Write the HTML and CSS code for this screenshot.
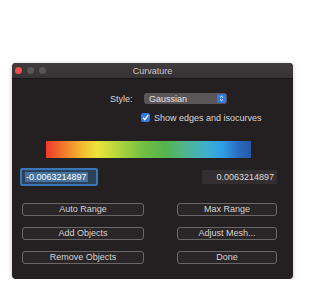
FILE: index.html
```html
<!DOCTYPE html>
<html lang="en">

<head>
    <meta charset="UTF-8">
    <meta name="viewport" content="width=device-width, initial-scale=1.0">
    <title>Curvature</title>
    <link rel="stylesheet" href="styles.css">
</head>

<body>
    <div class="window">
        <div class="titlebar">
            <div class="lights">
                <span class="light red"></span>
                <span class="light"></span>
                <span class="light"></span>
            </div>
            <div class="title">Curvature</div>
        </div>

        <div class="content">
            <div class="style-row">
                <label class="style-label">Style:</label>
                <div class="popup">
                    <span>Gaussian</span>
                    <span class="popup-arrows">
                        <svg width="5" height="7" viewBox="0 0 5 7">
                            <path d="M1 2.6 L2.5 1.2 L4 2.6 M1 4.4 L2.5 5.8 L4 4.4" fill="none" stroke="#fff" stroke-width="1"/>
                        </svg>
                    </span>
                </div>
            </div>

            <div class="check-row">
                <span class="checkbox">
                    <svg width="9" height="9" viewBox="0 0 9 9">
                        <path d="M2 4.6 L3.8 6.6 L7.2 2" fill="none" stroke="#fff" stroke-width="1.4"/>
                    </svg>
                </span>
                <span>Show edges and isocurves</span>
            </div>

            <div class="gradient"></div>

            <div class="fields">
                <div class="field focused"><span class="selected">-0.0063214897</span></div>
                <div class="field">0.0063214897</div>
            </div>

            <div class="buttons">
                <button class="btn">Auto Range</button>
                <button class="btn">Max Range</button>
                <button class="btn">Add Objects</button>
                <button class="btn">Adjust Mesh...</button>
                <button class="btn">Remove Objects</button>
                <button class="btn">Done</button>
            </div>
        </div>
    </div>
</body>

</html>
```

FILE: styles.css
```css
body {
    font-family: "Liberation Sans", Arial, sans-serif;
    background: #fff;
    margin: 0;
    padding: 63px 0 0 12px;
}

.window {
    width: 281px;
    background: #241f21;
    border-radius: 4px;
    overflow: hidden;
    box-shadow: 0 1px 4px rgba(0, 0, 0, 0.25);
}

.titlebar {
    height: 16px;
    background: linear-gradient(#403b3d, #363133);
    border-bottom: 1px solid #1a1618;
    box-sizing: border-box;
    display: flex;
    align-items: center;
    position: relative;
}

.lights {
    display: flex;
    gap: 5px;
    padding-left: 3px;
}

.light {
    width: 7px;
    height: 7px;
    border-radius: 50%;
    background: #5a5658;
}

.light.red {
    background: #ee4f4b;
}

.title {
    position: absolute;
    left: 0;
    right: 0;
    text-align: center;
    font-size: 9px;
    color: #c9c5c6;
}

.content {
    padding: 14px 0 15px 0;
    color: #d9d6d7;
    font-size: 9px;
}

.style-row {
    display: flex;
    align-items: center;
    height: 11px;
    padding-left: 98px;
}

.style-label {
    width: 34px;
    font-size: 9px;
}

.popup {
    width: 83px;
    height: 11px;
    background: #5a5658;
    border-radius: 3px;
    display: flex;
    align-items: center;
    justify-content: space-between;
    padding-left: 5px;
    box-sizing: border-box;
    color: #e6e3e4;
}

.popup-arrows {
    width: 9px;
    height: 9px;
    margin-right: 1px;
    background: #2f7ae6;
    border-radius: 2px;
    display: flex;
    align-items: center;
    justify-content: center;
}

.check-row {
    display: flex;
    align-items: center;
    gap: 4px;
    height: 9px;
    margin-top: 9px;
    padding-left: 129px;
}

.checkbox {
    width: 9px;
    height: 9px;
    background: #2f7ae6;
    border-radius: 2px;
    display: flex;
}

.gradient {
    width: 205px;
    height: 17px;
    margin: 19px 0 0 34px;
    background: linear-gradient(to right, #ee3a2a 0%, #f2742c 8%, #f3b62f 17%, #ece43a 25%, #b4d63c 35%, #74c042 47%, #55b44c 58%, #4fb58e 68%, #3eb0cc 78%, #2f9fe6 86%, #2a6bc0 94%, #2758aa 100%);
}

.fields {
    display: flex;
    align-items: center;
    justify-content: space-between;
    height: 18px;
    margin-top: 10px;
    padding: 0 16px 0 8px;
}

.field {
    width: 75px;
    height: 14px;
    background: #332e30;
    box-sizing: border-box;
    font-size: 9px;
    line-height: 14px;
    text-align: right;
    padding-right: 3px;
    color: #dcdada;
}

.field.focused {
    width: 78px;
    height: 18px;
    border: 2px solid #3b77b8;
    border-radius: 2px;
    background: #2d4258;
    line-height: 14px;
    text-align: left;
    padding: 0 0 0 3px;
}

.selected {
    background: #46729f;
    color: #fff;
    padding: 0 1px;
}

.buttons {
    display: grid;
    grid-template-columns: 122px 100px;
    column-gap: 33px;
    row-gap: 11px;
    margin-top: 17px;
    padding-left: 10px;
}

.btn {
    height: 13px;
    padding: 0;
    background: #2a2527;
    border: 1px solid #6b6668;
    border-radius: 3px;
    color: #d6d3d4;
    font-family: "Liberation Sans", Arial, sans-serif;
    font-size: 9px;
    line-height: 11px;
}
```
